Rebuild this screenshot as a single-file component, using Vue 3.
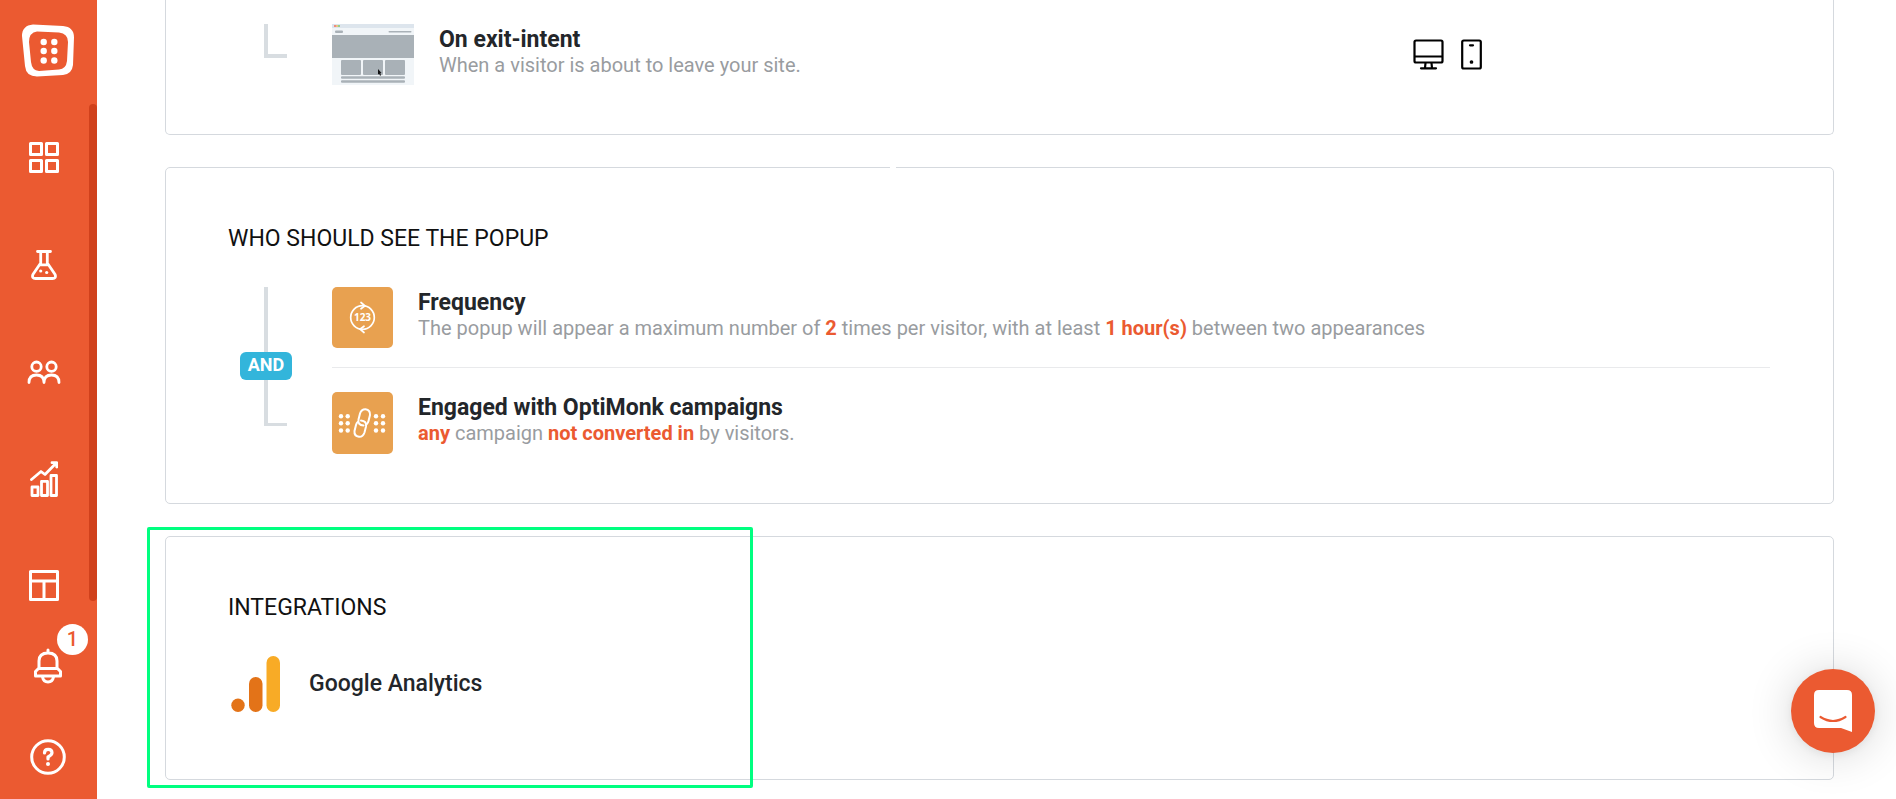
<script setup>
const navItems = [
  { id: 'dashboard', label: 'Dashboard' },
  { id: 'experiments', label: 'Experiments' },
  { id: 'audience', label: 'Audience' },
  { id: 'analytics', label: 'Analytics' },
  { id: 'templates', label: 'Templates' },
]
</script>

<template>
  <div class="page">
    <aside class="sidebar">
      <a class="logo" href="#" aria-label="Home">
        <svg width="52" height="53" viewBox="0 0 52 53">
          <path fill="#fff" fill-rule="evenodd" d="M11 0.500 L41 2 Q52 3 52 13.500 L51 41 Q50 50 41 51 L15 52.500 Q4 52.500 3 42 L0 12 Q0 1.500 11 0.500Z M15 7.500 L37 8.500 Q46 9.500 46 18 L45 37 Q44 45 37 45.500 L17 47 Q10 46.500 9 38 L7 18 Q7 8.500 15 7.500Z" />
          <g fill="#fff">
            <circle cx="21.700" cy="18" r="3.200" /><circle cx="32.300" cy="18" r="3.200" />
            <circle cx="21.700" cy="27" r="3.200" /><circle cx="32.300" cy="27" r="3.200" />
            <circle cx="21.700" cy="36.500" r="3.200" /><circle cx="32.300" cy="36.500" r="3.200" />
          </g>
        </svg>
      </a>

      <div class="scroller">
        <nav class="nav" aria-label="Main">
          <a v-for="item in navItems" :key="item.id" class="nav-link" href="#" :aria-label="item.label">
            <svg v-if="item.id === 'dashboard'" width="30" height="31" viewBox="0 0 30 31" fill="none" stroke="#fff" stroke-width="3" stroke-linejoin="round">
              <path d="M1.500 1.500h11v11h-11z M17.500 1.500h11v11h-11z M1.500 18.500h11v11h-11z M17.500 18.500h11v11h-11z" />
            </svg>
            <svg v-else-if="item.id === 'experiments'" width="26" height="30" viewBox="0 0 26 30" fill="none" stroke="#fff" stroke-width="2.800" stroke-linecap="round" stroke-linejoin="round">
              <path d="M6.500 1.500h13 M9.700 2v11L1.900 24.500Q0.500 28.500 4.500 28.500h17Q25.500 28.500 24.100 24.500L16.300 13V2 M8.500 14.800h9" />
              <circle cx="9.700" cy="21" r="1.600" fill="#fff" stroke="none" />
              <circle cx="15.700" cy="22.500" r="1.600" fill="#fff" stroke="none" />
            </svg>
            <svg v-else-if="item.id === 'audience'" width="34" height="24" viewBox="0 0 34 24" fill="none" stroke="#fff" stroke-width="2.800" stroke-linecap="round" stroke-linejoin="round">
              <circle cx="9.500" cy="6.700" r="4.700" /><circle cx="24.500" cy="6.700" r="4.700" />
              <path d="M2 22.500q0-7.500 7.500-7.500T17 22.500q0-7.500 7.500-7.500T32 22.500" />
            </svg>
            <svg v-else-if="item.id === 'analytics'" width="28" height="36" viewBox="0 0 28 36" fill="none" stroke="#fff" stroke-width="2.800" stroke-linecap="round" stroke-linejoin="round">
              <path d="M1.500 18.500l9.500-8 4 3L26 2.300 M22 1.700h4.700V6 M2 26h6v8.500H2z M11.500 20.300h6v14.200h-6z M21 14.500h5.500v20H21z" />
            </svg>
            <svg v-else width="30" height="31" viewBox="0 0 30 31" fill="none" stroke="#fff" stroke-width="3" stroke-linejoin="round">
              <path d="M1.500 1.500h27v28h-27z M2 11h26 M15 11v18" />
            </svg>
          </a>
        </nav>
        <div class="thumb"></div>
      </div>

      <div class="tools">
        <button class="tool" type="button" aria-label="Notifications">
          <svg width="28" height="36" viewBox="0 0 28 36" fill="none" stroke="#fff" stroke-width="3" stroke-linecap="round" stroke-linejoin="round">
            <path d="M14 2v3 M5 20.500V13q0-8 9-8t9 8v7.500 M4.500 20.500h19l3 3V28h-25v-4.500z M8.500 29q1 5 5.500 5t5.500-5" />
          </svg>
          <span class="count">1</span>
        </button>
        <button class="tool" type="button" aria-label="Help">
          <svg width="36" height="36" viewBox="0 0 36 36" fill="none" stroke="#fff" stroke-width="3">
            <circle cx="18" cy="18" r="16.300" />
            <path d="M14.500 14q0-3.700 3.700-3.700T22 13.800Q22 16 18 18v2" stroke-width="3.200" stroke-linecap="round" stroke-linejoin="round" />
            <circle cx="18" cy="25" r="2" fill="#fff" stroke="none" />
          </svg>
        </button>
      </div>
    </aside>

    <main class="content">
      <section class="card card-first">
        <div class="rules">
          <div class="branch branch-short"></div>
          <article class="rule rule-event">
            <svg class="preview" width="82" height="61" viewBox="0 0 82 61">
              <path fill="#f1f5f8" d="M0 0h82v61H0z" />
              <path fill="#dde5ed" d="M0 0h82v4H0z" />
              <circle cx="3" cy="2" r="1" fill="#f26b5e" /><circle cx="5" cy="2" r="1" fill="#f0b95b" /><circle cx="7" cy="2" r="1" fill="#7cc96d" />
              <g fill="#a9b1b7">
                <rect x="3" y="6.500" width="8" height="2.500" rx="1" /><rect x="56.500" y="7" width="23" height="1.500" rx="0.700" />
                <path d="M0 11h82v23H0z" />
                <rect x="9" y="36" width="20" height="15" rx="1" /><rect x="31" y="36" width="20" height="15" rx="1" /><rect x="53" y="36" width="20" height="15" rx="1" />
                <rect x="9" y="52.300" width="64" height="2.500" rx="1" /><rect x="9" y="56.200" width="64" height="2.500" rx="1" />
              </g>
              <path fill="#111" d="M46 45l3.500 4-1.200.3.700 2-1 .4-.8-2-1.200.8z" />
            </svg>
            <div class="rule-text">
              <h3>On exit-intent</h3>
              <p>When a visitor is about to leave your site.</p>
            </div>
            <div class="devices">
              <svg width="31" height="31" viewBox="0 0 31 31" fill="none" stroke="#000" stroke-width="2.200" stroke-linecap="round" stroke-linejoin="round">
                <rect x="1.500" y="1.500" width="28" height="22" rx="1.500" />
                <path d="M2 17.500h27 M12.500 24l-.5 5 M18.500 24l.5 5 M8 29.300h15" />
              </svg>
              <svg width="21" height="31" viewBox="0 0 21 31" fill="none" stroke="#000" stroke-width="2.200" stroke-linecap="round">
                <rect x="1.200" y="1.500" width="18.600" height="28" rx="1.500" />
                <path d="M9 6.300h3" /><circle cx="10.500" cy="23" r="1" stroke-width="1.700" />
              </svg>
            </div>
          </article>
        </div>
      </section>

      <section class="card card-audience">
        <div class="notch"></div>
        <h2>WHO SHOULD SEE THE POPUP</h2>
        <div class="rules">
          <div class="branch"><span class="operator">AND</span></div>
          <div class="rule-list">
            <article class="rule">
              <svg class="tile" width="61" height="61" viewBox="0 0 61 61">
                <rect width="61" height="61" rx="5" fill="#e8a150" />
                <g fill="none" stroke="#fff" stroke-width="1.700" stroke-linecap="round" stroke-linejoin="round">
                  <circle cx="30.500" cy="30.500" r="11.800" />
                  <path d="M29 15.500l4 3.300-4 3 M32 39.200l-4 3 4 3.300" />
                </g>
                <text class="tile-digits" x="30.500" y="33.500" text-anchor="middle">123</text>
              </svg>
              <div class="rule-text">
                <h3>Frequency</h3>
                <p>The popup will appear a maximum number of <b>2</b> times per visitor, with at least <b>1 hour(s)</b> between two appearances</p>
              </div>
            </article>
            <article class="rule">
              <svg class="tile" width="61" height="62" viewBox="0 0 61 62">
                <rect width="61" height="62" rx="5" fill="#e8a150" />
                <g fill="#fff">
                  <template v-for="x in [9, 15.7, 44, 51]" :key="x">
                    <circle v-for="y in [24.300, 31.300, 38.500]" :key="y" :cx="x" :cy="y" r="2.200" />
                  </template>
                </g>
                <g fill="none" stroke="#fff" stroke-width="2" stroke-linecap="round">
                  <path d="M31.500 33.500Q25.500 33 26.500 27.500L28 21.500Q29.500 17 33.500 17.200Q38.500 18 38 23L36.500 29Q36 31 34.800 32" />
                  <path d="M29 28.500Q35 29 34 34.500L32.500 40.500Q31 45 27 44.800Q22 44 22.500 39L24 33Q24.500 31 25.700 30" />
                </g>
              </svg>
              <div class="rule-text">
                <h3>Engaged with OptiMonk campaigns</h3>
                <p><b>any</b> campaign <b>not converted in</b> by visitors.</p>
              </div>
            </article>
          </div>
        </div>
      </section>

      <section class="card card-integrations">
        <h2>INTEGRATIONS</h2>
        <div class="integration">
          <svg width="54" height="58" viewBox="0 0 54 58">
            <circle cx="10" cy="50.300" r="6.700" fill="#e37318" />
            <rect x="21" y="22" width="13.500" height="35" rx="6.700" fill="#e37318" />
            <rect x="38.500" y="1" width="13.500" height="56" rx="6.700" fill="#f8ab26" />
          </svg>
          <span>Google Analytics</span>
        </div>
        <div class="highlight"></div>
      </section>
    </main>

    <button class="chat" type="button" aria-label="Open chat">
      <svg width="38" height="42" viewBox="0 0 38 42">
        <path fill="#fff" d="M5 0h28q5 0 5 5v37l-11-4H5q-5 0-5-5V5q0-5 5-5z" />
        <path d="M6.500 27q12.500 8 25 0" fill="none" stroke="#eb5a31" stroke-width="2.200" stroke-linecap="round" />
      </svg>
    </button>
  </div>
</template>

<style>
body {
  margin: 0;
  background: #fff;
}
</style>

<style scoped>
.page {
  display: flex;
  height: 100vh;
  overflow: hidden;
  position: relative;
  font-family: Roboto, "Liberation Sans", sans-serif;
  color: #23262a;
}
.sidebar {
  display: flex;
  flex-direction: column;
  flex: none;
  width: 97px;
  background: #eb5a31;
}
.logo {
  display: flex;
  flex: none;
  box-sizing: border-box;
  height: 104px;
  padding: 24px 22px;
}
.scroller {
  position: relative;
  flex: 1;
  min-height: 0;
  overflow: hidden;
}
.nav {
  display: flex;
  flex-direction: column;
  width: 88px;
}
.nav-link {
  display: flex;
  align-items: center;
  justify-content: center;
  height: 107px;
}
.thumb {
  position: absolute;
  top: 0;
  right: 0;
  width: 8px;
  height: 497px;
  border-radius: 4px;
  background: #d0411c;
}
.tools {
  display: flex;
  flex-direction: column;
  flex: none;
  gap: 55px;
  padding: 24px 0;
}
.tool {
  position: relative;
  display: flex;
  justify-content: center;
  width: 96px;
  padding: 0;
  border: 0;
  background: none;
}
.count {
  position: absolute;
  top: -24px;
  left: 57px;
  width: 31px;
  height: 31px;
  border-radius: 50%;
  background: #fff;
  color: #eb5a31;
  font: 500 20px/31px Roboto, sans-serif;
}
.content {
  display: flex;
  flex-direction: column;
  flex: 1;
  gap: 32px;
  min-width: 0;
  padding: 0 62px 0 68px;
}
.card {
  position: relative;
  flex: none;
  border: 1px solid #d5d9de;
  border-radius: 5px;
  padding: 55px 63px 49px 62px;
}
.card-first {
  border-top: 0;
  border-radius: 0 0 5px 5px;
  padding-top: 24px;
}
.notch {
  position: absolute;
  top: -1px;
  left: 724px;
  width: 6px;
  height: 1px;
  background: #fff;
}
h2,
h3,
p {
  margin: 0;
}
h2 {
  font-size: 23px;
  line-height: 32px;
  font-weight: 400;
  color: #111;
}
h3 {
  font-size: 23px;
  line-height: 26px;
  font-weight: 700;
}
p {
  font-size: 20px;
  line-height: 24px;
  color: #999c9f;
}
b {
  font-weight: 700;
  color: #eb5a31;
}
.rules {
  display: flex;
}
.card-audience .rules {
  margin-top: 32px;
}
.branch {
  position: relative;
  flex: none;
  box-sizing: border-box;
  width: 23px;
  height: 139px;
  margin: 0 45px 0 36px;
  border-left: 4px solid #d8dde1;
  border-bottom: 3px solid #d8dde1;
}
.branch-short {
  height: 34px;
  border-bottom-width: 4px;
}
.operator {
  position: absolute;
  top: 65px;
  left: -28px;
  box-sizing: border-box;
  width: 52px;
  height: 28px;
  border-radius: 6px;
  background: #33b5db;
  color: #fff;
  font-size: 18px;
  line-height: 26px;
  font-weight: 700;
  text-align: center;
}
.rule-list {
  flex: 1;
}
.rule {
  display: flex;
  gap: 25px;
}
.rule + .rule {
  margin-top: 19px;
  padding-top: 24px;
  border-top: 1px solid #e9eaec;
}
.rule-event {
  flex: 1;
}
.rule-text {
  padding-top: 3px;
}
.tile-digits {
  fill: #fff;
  font-family: "Open Sans", sans-serif;
  font-size: 10px;
  font-weight: 700;
}
.devices {
  display: flex;
  align-items: center;
  gap: 17px;
  margin-left: auto;
  margin-right: 20%;
}
.card-integrations {
  padding-bottom: 66px;
}
.integration {
  display: flex;
  align-items: center;
  gap: 27px;
  margin-top: 31px;
  font-size: 23px;
  line-height: 28px;
  font-weight: 500;
}
.highlight {
  position: absolute;
  top: -10px;
  left: -19px;
  box-sizing: border-box;
  width: 606px;
  height: 261px;
  border: 3px solid #00ff80;
  border-radius: 2px;
  pointer-events: none;
}
.chat {
  position: absolute;
  right: 21px;
  bottom: 46px;
  display: flex;
  align-items: center;
  justify-content: center;
  width: 84px;
  height: 84px;
  padding: 0;
  border: 0;
  border-radius: 50%;
  background: #eb5a31;
  box-shadow: 0 2px 8px rgba(0, 0, 0, 0.06), 0 2px 46px rgba(0, 0, 0, 0.16);
}
</style>
